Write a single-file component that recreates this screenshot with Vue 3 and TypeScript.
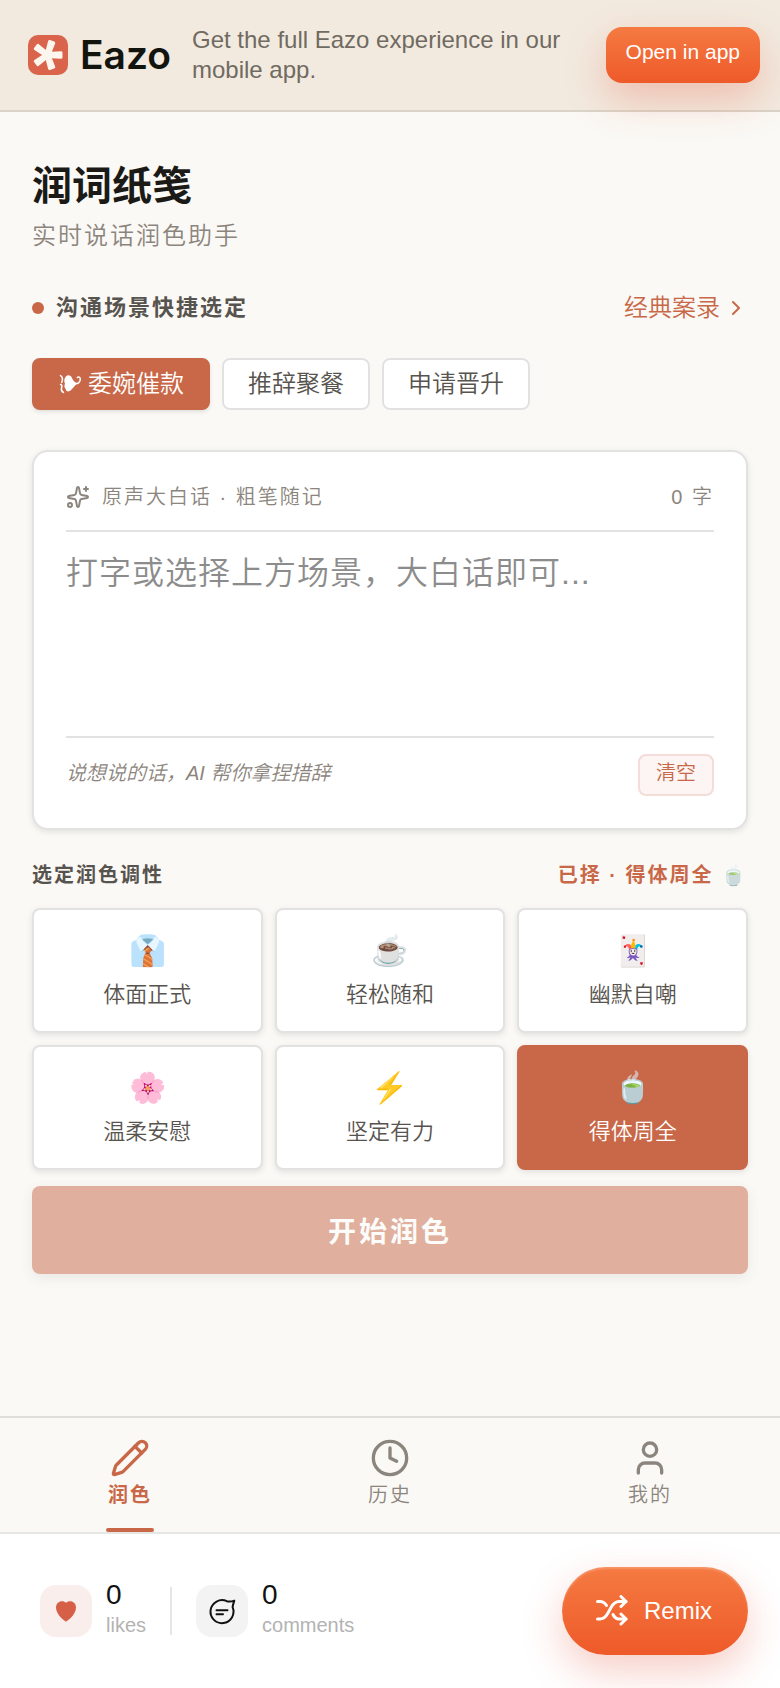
<script setup lang="ts">
import { computed, ref } from 'vue'

interface Tone {
  icon: string
  name: string
}

const scenes: string[] = ['委婉催款', '推辞聚餐', '申请晋升']
const tones: Tone[] = [
  { icon: '👔', name: '体面正式' },
  { icon: '☕', name: '轻松随和' },
  { icon: '🃏', name: '幽默自嘲' },
  { icon: '🌸', name: '温柔安慰' },
  { icon: '⚡', name: '坚定有力' },
  { icon: '🍵', name: '得体周全' },
]
const tabs = [
  { id: 'polish', name: '润色' },
  { id: 'history', name: '历史' },
  { id: 'mine', name: '我的' },
]

const scene = ref<string>(scenes[0])
const tone = ref<Tone>(tones[5])
const tab = ref<string>('polish')
const draft = ref<string>('')
const count = computed<number>(() => draft.value.length)
</script>

<template>
  <div class="page">
    <header class="banner">
      <div class="brand">
        <svg class="brand-mark" viewBox="0 0 40 40" aria-hidden="true">
          <rect width="40" height="40" rx="10" fill="#d9644b" />
          <g transform="translate(19.5 20)" fill="#fdf6ee" stroke="#fdf6ee" stroke-width="3" stroke-linejoin="round">
            <path
              v-for="angle in [0, 72, 144, 216, 288]"
              :key="angle"
              d="M0 -1.4 L13.500 -2.2 L13.500 2.2 L0 1.4 Z"
              :transform="`rotate(${angle})`"
            />
          </g>
        </svg>
        <span class="brand-name">Eazo</span>
      </div>
      <p class="banner-text">Get the full Eazo experience in our mobile app.</p>
      <button type="button" class="open-app">Open in app</button>
    </header>

    <main class="content">
      <h1>润词纸笺</h1>
      <p class="subtitle">实时说话润色助手</p>

      <div class="scene-head">
        <h2 class="scene-title"><span class="dot"></span>沟通场景快捷选定</h2>
        <a href="#cases" class="cases">
          经典案录
          <svg viewBox="0 0 24 24" aria-hidden="true"><path d="m9 18 6-6-6-6" /></svg>
        </a>
      </div>

      <div class="scenes">
        <button
          v-for="item in scenes"
          :key="item"
          type="button"
          class="scene"
          :class="{ active: item === scene }"
          @click="scene = item"
        >
          <svg v-if="item === scene" viewBox="0 0 24 24" aria-hidden="true">
            <path
              class="leaf"
              d="M19.500 11.500C17 13 15.500 15.500 13 18C11 20.300 7.500 19.800 7.800 17C6.300 16 6 13.500 7 11.700C6 9.800 6 7 7.500 5C9.200 2.400 13 3 14 6C15 8.500 16.500 10.300 19.500 11.500Z"
            />
            <path class="vine" d="M17 11.500C20 12 22.500 10 22.300 7C22.200 5.200 20.500 4.300 19.300 5.500" />
            <path class="vine" d="M2.500 3.500C4.500 5 4.800 8 3.700 10.500M2.500 12.500C4 12.500 4.300 14 3.500 16C3 18 3.500 19.500 5.500 20.500" />
          </svg>
          {{ item }}
        </button>
      </div>

      <section class="editor">
        <div class="editor-head">
          <svg viewBox="0 0 24 24" aria-hidden="true">
            <path
              d="M11.017 2.814a1 1 0 0 1 1.966 0l1.051 5.558a2 2 0 0 0 1.594 1.594l5.558 1.051a1 1 0 0 1 0 1.966l-5.558 1.051a2 2 0 0 0-1.594 1.594l-1.051 5.558a1 1 0 0 1-1.966 0l-1.051-5.558a2 2 0 0 0-1.594-1.594l-5.558-1.051a1 1 0 0 1 0-1.966l5.558-1.051a2 2 0 0 0 1.594-1.594z"
            />
            <path d="M20 2v4M22 4h-4" />
            <circle cx="4" cy="20" r="2" />
          </svg>
          <label for="draft">原声大白话 · 粗笔随记</label>
          <span class="count">{{ count }} 字</span>
        </div>
        <textarea id="draft" v-model="draft" placeholder="打字或选择上方场景，大白话即可..."></textarea>
        <div class="editor-foot">
          <em>说想说的话，AI 帮你拿捏措辞</em>
          <button type="button" class="clear" @click="draft = ''">清空</button>
        </div>
      </section>

      <div class="tone-head">
        <h2>选定润色调性</h2>
        <p>已择 · {{ tone.name }} <span class="chosen-icon">{{ tone.icon }}</span></p>
      </div>

      <div class="tones">
        <button
          v-for="item in tones"
          :key="item.name"
          type="button"
          class="tone"
          :class="{ active: item.name === tone.name }"
          @click="tone = item"
        >
          <span class="tone-icon">{{ item.icon }}</span>
          <span class="tone-name">{{ item.name }}</span>
        </button>
      </div>

      <button type="button" class="submit" :disabled="count === 0">开始润色</button>
    </main>

    <nav class="tabs">
      <button
        v-for="item in tabs"
        :key="item.id"
        type="button"
        class="tab"
        :class="{ active: item.id === tab }"
        @click="tab = item.id"
      >
        <svg viewBox="0 0 24 24" aria-hidden="true">
          <template v-if="item.id === 'polish'">
            <path
              d="M21.174 6.812a1 1 0 0 0-3.986-3.987L3.842 16.174a2 2 0 0 0-.5.83l-1.321 4.352a.5.5 0 0 0 .623.622l4.353-1.32a2 2 0 0 0 .83-.497z"
            />
            <path d="m15 5 4 4" />
          </template>
          <template v-else-if="item.id === 'history'">
            <circle cx="12" cy="12" r="10" />
            <path d="M12 6v6l4 2" />
          </template>
          <template v-else>
            <path d="M19 21v-2a4 4 0 0 0-4-4H9a4 4 0 0 0-4 4v2" />
            <circle cx="12" cy="7" r="4" />
          </template>
        </svg>
        <span>{{ item.name }}</span>
      </button>
    </nav>

    <footer class="actions">
      <button type="button" class="stat">
        <span class="tile like">
          <svg viewBox="0 0 24 24" aria-hidden="true">
            <path
              d="M12 22.500C11 22.500 2 16 2 8.500C2 4.500 4.700 2.200 8 2.200C9.700 2.200 11 2.900 12 3.700C13 2.900 14.300 2.200 16 2.200C19.300 2.200 22 4.500 22 8.500C22 16 13 22.500 12 22.500Z"
            />
          </svg>
        </span>
        <span class="figures"><b>0</b><small>likes</small></span>
      </button>
      <span class="divider"></span>
      <button type="button" class="stat">
        <span class="tile">
          <svg viewBox="0 0 28 28" aria-hidden="true">
            <path d="M18.800 4.200A11.500 11.500 0 1 0 24.600 10.200C24.800 8 25.600 6 26.300 3.600C23.700 4.600 21.300 4.900 18.800 4.200Z" />
            <path d="M8.500 13.300H19.500M8.500 17.300H15" />
          </svg>
        </span>
        <span class="figures"><b>0</b><small>comments</small></span>
      </button>
      <button type="button" class="remix">
        <svg viewBox="0 0 32 32" aria-hidden="true">
          <path d="M1.500 6.500H4C7 6.500 9 8 10.500 10.500" />
          <path d="M1.500 24H4C8 24 10 21.500 12 18L15 12.500C17 9 19 6.500 23 6.500H30" />
          <path d="M17 19.500C18.500 22.500 20 24 23 24H30" />
          <path d="M25 1.500L30 6.500L25 11.500M25 19L30 24L25 29" />
        </svg>
        Remix
      </button>
    </footer>
  </div>
</template>

<style>
body {
  margin: 0;
  background: #faf9f5;
}
</style>

<style scoped>
.page {
  --accent: #c86848;
  --line: #e2e2e2;
  --muted: #8c857d;
  --ink: #57534e;
  display: flex;
  flex-direction: column;
  min-height: 100vh;
  background: #faf9f5;
  color: var(--ink);
  font-family: 'Liberation Sans', 'Noto Sans CJK SC', sans-serif;
  font-weight: 350;
}

.page *,
.page {
  box-sizing: border-box;
}

h1,
h2,
p {
  margin: 0;
}

button {
  margin: 0;
  padding: 0;
  border: 0;
  background: none;
  color: inherit;
  font: inherit;
  cursor: pointer;
}

svg {
  flex: none;
  fill: none;
  stroke: currentColor;
  stroke-width: 2;
  stroke-linecap: round;
  stroke-linejoin: round;
}

.banner {
  display: flex;
  align-items: center;
  gap: 20px;
  padding: 25px 20px 25px 28px;
  border-bottom: 2px solid #dad4c8;
  background: #f2eadf;
}

.brand {
  display: flex;
  align-items: center;
  gap: 12px;
  min-width: 144px;
}

.brand-mark {
  width: 40px;
  height: 40px;
  stroke: none;
}

.brand-name {
  color: #14140f;
  font: 600 39px/40px Inter, 'Liberation Sans', sans-serif;
}

.banner-text {
  flex: 1;
  color: #706a62;
  font-size: 24px;
  line-height: 30px;
}

.open-app {
  height: 56px;
  padding: 0 20px 6px;
  border-radius: 16px;
  background: linear-gradient(#f57a42, #ee5a29);
  box-shadow: 0 16px 40px rgba(226, 75, 50, 0.28);
  color: #fff;
  font-size: 21px;
  white-space: nowrap;
}

.content {
  flex: 1;
  display: flex;
  flex-direction: column;
  padding: 46px 32px 32px;
}

h1 {
  color: #1c1a17;
  font-size: 40px;
  font-weight: 700;
  line-height: 56px;
}

.subtitle {
  margin-top: 4px;
  color: var(--muted);
  font-size: 24px;
  letter-spacing: 2px;
  line-height: 36px;
}

.scene-head,
.tone-head {
  display: flex;
  align-items: center;
  justify-content: space-between;
}

.scene-head {
  margin-top: 36px;
  line-height: 36px;
}

.scene-title {
  display: flex;
  align-items: center;
  gap: 12px;
  font-size: 22px;
  letter-spacing: 2px;
}

.dot {
  width: 12px;
  height: 12px;
  border-radius: 50%;
  background: var(--accent);
}

.cases {
  display: flex;
  align-items: center;
  gap: 4px;
  color: var(--accent);
  font-size: 24px;
  text-decoration: none;
}

.cases svg {
  width: 24px;
  height: 24px;
}

.scenes {
  display: flex;
  gap: 12px;
  margin-top: 32px;
}

.scene {
  display: flex;
  align-items: center;
  gap: 6px;
  height: 52px;
  padding: 0 24px;
  border: 2px solid var(--line);
  border-radius: 8px;
  background: #fff;
  font-size: 24px;
  line-height: 36px;
}

.scene svg {
  width: 24px;
  height: 24px;
}

.leaf {
  fill: currentColor;
  stroke: none;
}

.vine {
  stroke-width: 1.5;
}

.scene.active {
  border-color: var(--accent);
  background: var(--accent);
  box-shadow: 0 2px 4px rgba(0, 0, 0, 0.1);
  color: #fff;
}

.editor {
  margin-top: 40px;
  padding: 28px 32px 32px;
  border: 2px solid var(--line);
  border-radius: 16px;
  background: #fff;
  box-shadow: 0 2px 6px rgba(0, 0, 0, 0.1);
}

.editor-head {
  display: flex;
  align-items: center;
  gap: 12px;
  padding-bottom: 16px;
  border-bottom: 2px solid var(--line);
  color: var(--muted);
  font-size: 20px;
  letter-spacing: 2px;
  line-height: 34px;
}

.editor-head svg {
  width: 24px;
  height: 24px;
}

.count {
  margin-left: auto;
}

textarea {
  display: block;
  width: 100%;
  height: 204px;
  padding: 16px 0;
  border: 0;
  outline: 0;
  resize: none;
  background: none;
  color: var(--ink);
  font: inherit;
  font-size: 32px;
  letter-spacing: 1px;
  line-height: 50px;
}

textarea::placeholder {
  color: #8c8c8c;
  opacity: 1;
}

.editor-foot {
  display: flex;
  align-items: center;
  justify-content: space-between;
  padding-top: 16px;
  border-top: 2px solid var(--line);
  color: var(--muted);
  font-size: 20px;
  line-height: 34px;
}

.editor-foot em {
  padding-bottom: 4px;
}

.clear {
  height: 42px;
  padding: 0 16px 4px;
  border: 2px solid #f4dcd8;
  border-radius: 8px;
  background: #fcf5f3;
  color: var(--accent);
}

.tone-head {
  margin-top: 28px;
  font-size: 20px;
  font-weight: 700;
  letter-spacing: 2px;
  line-height: 34px;
}

.tone-head h2 {
  font-size: 20px;
}

.tone-head p {
  color: var(--accent);
}

.chosen-icon {
  opacity: 0.7;
}

.tones {
  display: grid;
  grid-template-columns: repeat(3, 1fr);
  gap: 12px;
  margin-top: 16px;
}

.tone {
  display: flex;
  flex-direction: column;
  align-items: center;
  gap: 6px;
  height: 125px;
  padding-top: 21px;
  border: 2px solid var(--line);
  border-radius: 8px;
  background: #fff;
  box-shadow: 0 2px 6px rgba(0, 0, 0, 0.1);
}

.tone.active {
  border-color: var(--accent);
  background: var(--accent);
  color: #fff;
}

.tone-icon {
  font-size: 30px;
  line-height: 40px;
}

.tone-name {
  font-size: 22px;
  line-height: 36px;
}

.submit {
  height: 88px;
  margin-top: 16px;
  border-radius: 8px;
  background: var(--accent);
  box-shadow: 0 4px 12px rgba(0, 0, 0, 0.12);
  color: #fff;
  font-size: 28px;
  font-weight: 700;
  letter-spacing: 3px;
}

.submit:disabled {
  opacity: 0.5;
}

.tabs {
  display: grid;
  grid-template-columns: repeat(3, 1fr);
  height: 116px;
  border-top: 2px solid #dfdedb;
}

.tab {
  position: relative;
  display: flex;
  flex-direction: column;
  align-items: center;
  padding-top: 20px;
  color: var(--muted);
  font-size: 20px;
  letter-spacing: 2px;
  line-height: 34px;
}

.tab svg {
  width: 40px;
  height: 40px;
}

.tab.active {
  color: var(--accent);
  font-weight: 700;
}

.tab.active::after {
  content: '';
  position: absolute;
  bottom: 0;
  width: 48px;
  height: 4px;
  border-radius: 2px;
  background: var(--accent);
}

.actions {
  display: flex;
  align-items: center;
  gap: 24px;
  height: 156px;
  padding: 0 32px 0 40px;
  border-top: 2px solid #e6e6e4;
  background: #fff;
}

.stat {
  display: flex;
  align-items: center;
  gap: 14px;
  text-align: left;
}

.tile {
  display: grid;
  place-items: center;
  width: 52px;
  height: 52px;
  border-radius: 16px;
  background: #f3f3f3;
  color: #111;
}

.tile svg {
  width: 28px;
  height: 28px;
}

.tile.like {
  background: #faeeec;
}

.tile.like svg {
  width: 24px;
  height: 24px;
  fill: #d65f48;
  stroke: none;
}

.figures {
  display: flex;
  flex-direction: column;
  padding-bottom: 4px;
}

.figures b {
  color: #111;
  font-size: 28px;
  font-weight: inherit;
  line-height: 32px;
}

.figures small {
  color: #b3b3b3;
  font-size: 20px;
  line-height: 28px;
}

.divider {
  width: 2px;
  height: 48px;
  background: #e6e6e6;
}

.remix {
  display: flex;
  align-items: center;
  gap: 16px;
  height: 88px;
  margin-left: auto;
  padding: 0 36px 0 34px;
  border-radius: 44px;
  background: linear-gradient(#f57a42, #ee5a29);
  box-shadow:
    0 16px 40px rgba(226, 75, 50, 0.28),
    inset 0 2px 2px rgba(255, 255, 255, 0.2);
  color: #fff;
  font-size: 24px;
}

.remix svg {
  width: 32px;
  height: 32px;
  stroke-width: 3;
}
</style>
